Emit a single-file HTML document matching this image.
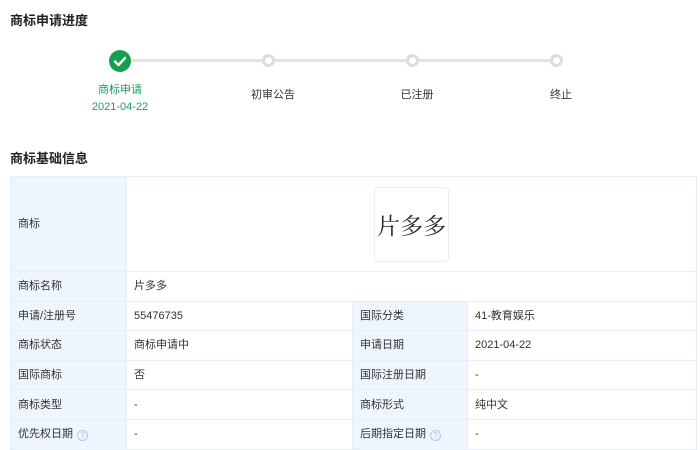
<!DOCTYPE html>
<html><head><meta charset="utf-8"><style>
*{margin:0;padding:0;box-sizing:border-box}
body{width:700px;height:449px;background:#fff;font-family:"Liberation Sans","Noto Sans CJK SC",sans-serif;font-size:12px;color:#333;position:relative;overflow:hidden}
.h{position:absolute;left:10px;font-size:13px;font-weight:bold;color:#222}
.line{position:absolute;left:120px;width:436px;top:59px;height:3px;background:#e4e4e4}
.dot{position:absolute;top:54px;width:13px;height:13px;border:3px solid #ddd;border-radius:50%;background:#fff}
.chk{position:absolute;left:109px;top:50px;width:22px;height:22px;border-radius:50%;background:#14a04f}
.lab{position:absolute;top:86px;width:100px;text-align:center;font-size:11px;color:#333}
table{position:absolute;left:10px;top:176px;width:687px;border-collapse:collapse;font-size:11px}
td{border:1px solid #e8eef5;padding:0 7px;height:29.6px;color:#333;line-height:14px;vertical-align:middle}
td.k{background:#eef5fc;width:116px}
td.v1{width:226px}
td.k2{background:#eef5fc;width:115px}
.q{display:inline-block;width:11px;height:11px;border:1px solid #a9cdef;border-radius:50%;color:#a9cdef;font-size:8px;line-height:9px;text-align:center;margin-left:4px;vertical-align:-1px}
.logo{width:75px;height:75px;margin:0 auto;border:1px solid #eee;border-radius:4px;font-size:23px;line-height:73px;text-align:center;font-family:"Noto Serif CJK SC",serif;color:#222}
</style></head><body>
<div class="h" style="top:10px">商标申请进度</div>
<div class="line"></div>
<div class="chk"><svg width="22" height="22"><path d="M6 11.5l3.5 3.5 6.5-7" stroke="#fff" stroke-width="2.4" fill="none" stroke-linecap="round" stroke-linejoin="round"/></svg></div>
<div class="dot" style="left:262px"></div>
<div class="dot" style="left:406px"></div>
<div class="dot" style="left:550px"></div>
<div class="lab" style="left:70px;top:82px;color:#1aa35a;line-height:17px">商标申请<br>2021-04-22</div>
<div class="lab" style="left:223px">初审公告</div>
<div class="lab" style="left:367px">已注册</div>
<div class="lab" style="left:511px">终止</div>
<div class="h" style="top:148px">商标基础信息</div>
<table>
<tr><td class="k" style="height:95px">商标</td><td colspan="3"><div class="logo">片多多</div></td></tr>
<tr><td class="k">商标名称</td><td colspan="3">片多多</td></tr>
<tr><td class="k">申请/注册号</td><td class="v1">55476735</td><td class="k2">国际分类</td><td>41-教育娱乐</td></tr>
<tr><td class="k">商标状态</td><td class="v1">商标申请中</td><td class="k2">申请日期</td><td>2021-04-22</td></tr>
<tr><td class="k">国际商标</td><td class="v1">否</td><td class="k2">国际注册日期</td><td>-</td></tr>
<tr><td class="k">商标类型</td><td class="v1">-</td><td class="k2">商标形式</td><td>纯中文</td></tr>
<tr><td class="k">优先权日期<span class="q">?</span></td><td class="v1">-</td><td class="k2">后期指定日期<span class="q">?</span></td><td>-</td></tr>
</table>
</body></html>
